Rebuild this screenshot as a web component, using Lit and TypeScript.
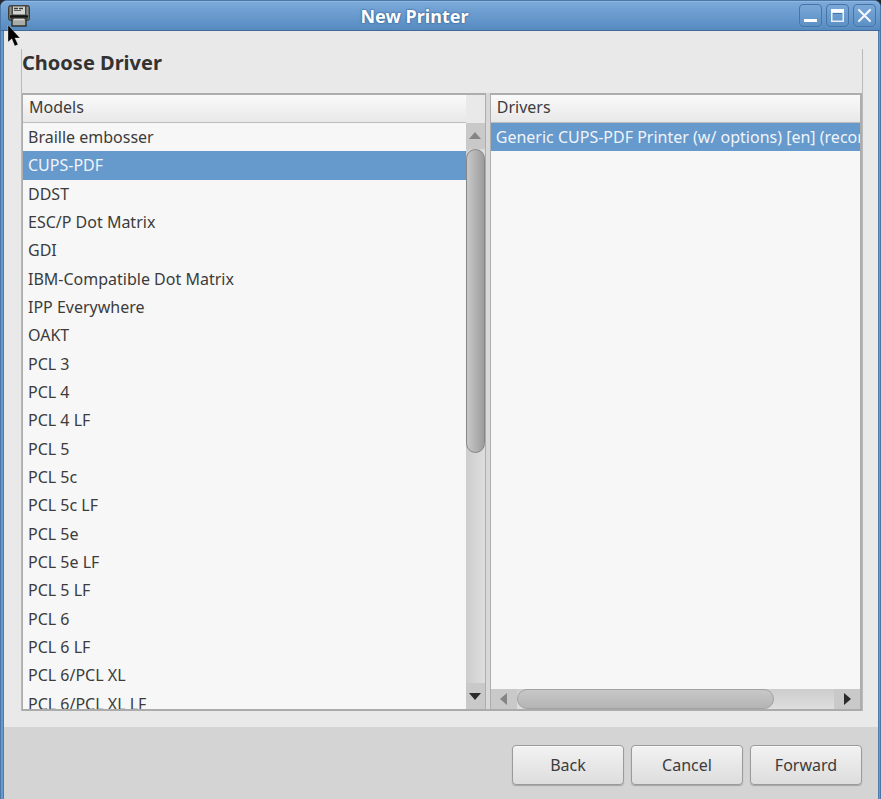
import { LitElement, html, css, svg } from "lit";
import { customElement, property, state } from "lit/decorators.js";
import { classMap } from "lit/directives/class-map.js";

const MODELS = [
  "Braille embosser", "CUPS-PDF", "DDST", "ESC/P Dot Matrix", "GDI",
  "IBM-Compatible Dot Matrix", "IPP Everywhere", "OAKT", "PCL 3", "PCL 4",
  "PCL 4 LF", "PCL 5", "PCL 5c", "PCL 5c LF", "PCL 5e", "PCL 5e LF",
  "PCL 5 LF", "PCL 6", "PCL 6 LF", "PCL 6/PCL XL", "PCL 6/PCL XL LF",
];
const DRIVERS = ["Generic CUPS-PDF Printer (w/ options) [en] (recommended)"];

@customElement("scroll-bar")
class ScrollBar extends LitElement {
  @property({ type: Boolean, reflect: true }) horizontal = false;

  static styles = css`
    :host { display: flex; flex-direction: column; width: 19px; background: linear-gradient(90deg, #cdcdcd, #dedede); }
    :host([horizontal]) { flex-direction: row; width: auto; height: 20px; background: linear-gradient(#cdcdcd, #dedede); }
    .arrow {
      flex: none; display: flex; align-items: center; justify-content: center;
      width: 19px; height: 26px; padding: 0; border: 0; background: #c9c9c9;
    }
    .arrow svg { display: block; }
    :host([horizontal]) .arrow { width: 26px; height: 20px; }
    .track { flex: 1; display: flex; flex-direction: inherit; min-width: 0; min-height: 0; }
    .thumb {
      flex: 0 0 57%; box-sizing: border-box; border: 1px solid #868686; border-radius: 10px;
      background: linear-gradient(90deg, #c8c8c8, #9c9c9c);
    }
    :host([horizontal]) .thumb { flex-basis: 81%; border-color: #a2a2a2; background: linear-gradient(#c8c8c8, #b4b4b4); }
  `;

  private arrow(label: string, points: string, fill: string) {
    return html`<button class="arrow" aria-label=${label}>
      <svg width="12" height="12" viewBox="0 0 12 12">${svg`<path d=${points} fill=${fill} />`}</svg>
    </button>`;
  }

  render() {
    return html`
      ${this.horizontal
        ? this.arrow("Scroll left", "M9 0V12L2 6Z", "#858585")
        : this.arrow("Scroll up", "M0 9H12L6 2Z", "#858585")}
      <div class="track"><div class="thumb"></div></div>
      ${this.horizontal
        ? this.arrow("Scroll right", "M3 0V12L10 6Z", "#2b2b2b")
        : this.arrow("Scroll down", "M0 3H12L6 10Z", "#2b2b2b")}
    `;
  }
}

@customElement("app-root")
class AppRoot extends LitElement {
  @state() private model = "CUPS-PDF";
  @state() private driver = DRIVERS[0];

  static styles = css`
    :host {
      display: block; height: 100vh; overflow: hidden; background: #26292e;
      font-family: "Noto Sans", sans-serif; font-size: 16px; color: #3c3c3c;
    }
    * { box-sizing: border-box; }
    button { font: inherit; color: inherit; margin: 0; }
    .window {
      display: flex; flex-direction: column; height: 100%; position: relative;
      border: solid #4b77a8; border-width: 1px 1px 0 1px; border-radius: 7px 7px 0 0;
      background: #6699cc;
    }
    .titlebar {
      flex: none; display: flex; align-items: center; height: 30px;
      padding: 0 4px 0 7px; border-radius: 6px 6px 0 0; border-bottom: 1px solid #42699a;
      background: linear-gradient(#7caadb, #568bc0); box-shadow: inset 0 1px #8fb7e0;
    }
    .app-icon { display: block; }
    .title {
      flex: 1; margin: 0; text-align: center; font-size: 18px; line-height: 24px; font-weight: 700; color: #fff;
      text-shadow: 0 0 2px #2f5f96, 0 0 2px #3d6ea5;
    }
    .controls { display: flex; gap: 4px; }
    .control {
      display: flex; align-items: center; justify-content: center; width: 23px; height: 23px; padding: 0;
      border: 1px solid #4474a8; border-radius: 4px; background: linear-gradient(#7aa8d8, #5c90c5);
      box-shadow: 0 0 1px #8db5de;
    }
    .client {
      flex: 1; min-height: 0; display: flex; flex-direction: column; margin: 0 2px 0 3px;
      background: #e9e9e9; box-shadow: 0 0 0 1px #4e7cac; clip-path: inset(0 -1px 0 -1px);
    }
    .page {
      flex: 1; min-height: 0; display: flex; flex-direction: column; margin: 18px 15px 16px 17px;
      border: solid #b9b9b9; border-width: 0 1px;
    }
    .heading { margin: 0; padding-bottom: 16px; font-size: 20px; line-height: 28px; font-weight: 700; color: #333; }
    .panes { flex: 1; min-height: 0; display: flex; gap: 4px; background: #d8d8d8; border-bottom: 2px solid #ababab; }
    .pane {
      display: flex; flex-direction: column; min-width: 0; min-height: 0;
      border: solid #adadad; border-width: 2px 1px 0 1px; background: #f7f7f7;
    }
    .models { flex: 464 1 0; }
    .drivers { flex: 371 1 0; border-right-width: 2px; }
    .pane-head {
      flex: none; height: 28px; margin: 0; padding: 0 6px; border-bottom: 1px solid #bdbdbd;
      background: linear-gradient(#fafafa, #e8e8e8); font-size: 16px; line-height: 24px; font-weight: 400;
    }
    .models .pane-head { margin-right: 19px; box-shadow: 19px 0 #e9e9e9; }
    .pane-body { flex: 1; min-height: 0; display: flex; }
    .drivers .pane-body { flex-direction: column; }
    .clip { flex: 1; min-width: 0; min-height: 0; overflow: hidden; }
    .list { display: grid; margin: 0; padding: 0; list-style: none; }
    .models .list { height: 595px; grid-auto-rows: 1fr; }
    .row {
      display: block; width: 100%; height: 100%; padding: 0 5px; border: 0; background: none;
      text-align: left; line-height: 28px; white-space: nowrap;
    }
    .selected { background: #6699cc; color: #f0f4fa; }
    .actions {
      flex: none; display: flex; justify-content: flex-end; gap: 7px; padding: 18px 16px 14px; background: #d4d4d4;
    }
    .action {
      width: 112px; height: 40px; padding: 0; border: 1px solid #9a9a9a; border-radius: 4px;
      background: linear-gradient(#f2f2f2, #dddddd); box-shadow: 0 1px 1px #a5a5a5, inset 0 1px #fafafa;
    }
    .pointer { position: absolute; left: 6px; top: 23px; pointer-events: none; }
  `;

  private rows(items: string[], current: string, pick: (v: string) => void) {
    return html`<ul class="list">
      ${items.map((item) => html`<li>
        <button
          class=${classMap({ row: true, selected: item === current })}
          aria-pressed=${item === current ? "true" : "false"}
          @click=${() => pick(item)}
        >${item}</button>
      </li>`)}
    </ul>`;
  }

  render() {
    return html`
      <div class="window">
        <header class="titlebar">
          <svg class="app-icon" width="22" height="22" viewBox="0 0 22 22" aria-hidden="true">
            <rect x="0.5" y="0.5" width="21" height="15" rx="2" fill="#5d605c" stroke="#3a3d3a" />
            <path d="M2.500 2V13M19.500 2V13" stroke="#8d908b" stroke-width="1.500" />
            <path d="M4.500 1H17.500V10H4.500Z" fill="#d3d4d0" stroke="#474a46" />
            <path d="M6 3.500H16" stroke="#3b3d3a" stroke-width="1.500" stroke-dasharray="4 1" />
            <path d="M6 5.500H13" stroke="#5b5d59" />
            <path d="M2 11.500H20" stroke="#111311" stroke-width="2.500" />
            <path d="M4 13H18V21H4Z" fill="#a9aba6" stroke="#2f322e" stroke-width="1.500" />
            <path d="M6 14.500H16" stroke="#d9dad6" stroke-width="1.500" />
          </svg>
          <h1 class="title">New Printer</h1>
          <div class="controls">
            <button class="control" aria-label="Minimize">
              <svg width="15" height="15" viewBox="0 0 15 15"><path d="M1 11H14V14H1Z" fill="#fff" /></svg>
            </button>
            <button class="control" aria-label="Maximize">
              <svg width="15" height="15" viewBox="0 0 15 15">
                <path d="M1 1H14V14H1ZM2.500 5V12.500H12.500V5Z" fill="#e6eff8" fill-rule="evenodd" />
                <path d="M1 1H14V4H1Z" fill="#fff" />
                <path d="M3 5.500H12" stroke="#4474a8" />
              </svg>
            </button>
            <button class="control" aria-label="Close">
              <svg width="15" height="15" viewBox="0 0 15 15">
                <path d="M2 2L13 13M13 2L2 13" stroke="#f2f7fc" stroke-width="2.200" stroke-linecap="round" />
              </svg>
            </button>
          </div>
        </header>
        <main class="client">
          <section class="page">
            <h2 class="heading">Choose Driver</h2>
            <div class="panes">
              <section class="pane models">
                <h3 class="pane-head">Models</h3>
                <div class="pane-body">
                  <div class="clip">${this.rows(MODELS, this.model, (v) => (this.model = v))}</div>
                  <scroll-bar></scroll-bar>
                </div>
              </section>
              <section class="pane drivers">
                <h3 class="pane-head">Drivers</h3>
                <div class="pane-body">
                  <div class="clip">${this.rows(DRIVERS, this.driver, (v) => (this.driver = v))}</div>
                  <scroll-bar horizontal></scroll-bar>
                </div>
              </section>
            </div>
          </section>
          <footer class="actions">
            <button class="action">Back</button>
            <button class="action">Cancel</button>
            <button class="action">Forward</button>
          </footer>
        </main>
        <svg class="pointer" width="14" height="22" viewBox="0 0 14 22" aria-hidden="true">
          <path d="M1 1V18L4.800 14.800L7.800 22L11 20.500L8 14H13Z" fill="#000" stroke="#fff" stroke-width="0.300" />
        </svg>
      </div>
    `;
  }
}
